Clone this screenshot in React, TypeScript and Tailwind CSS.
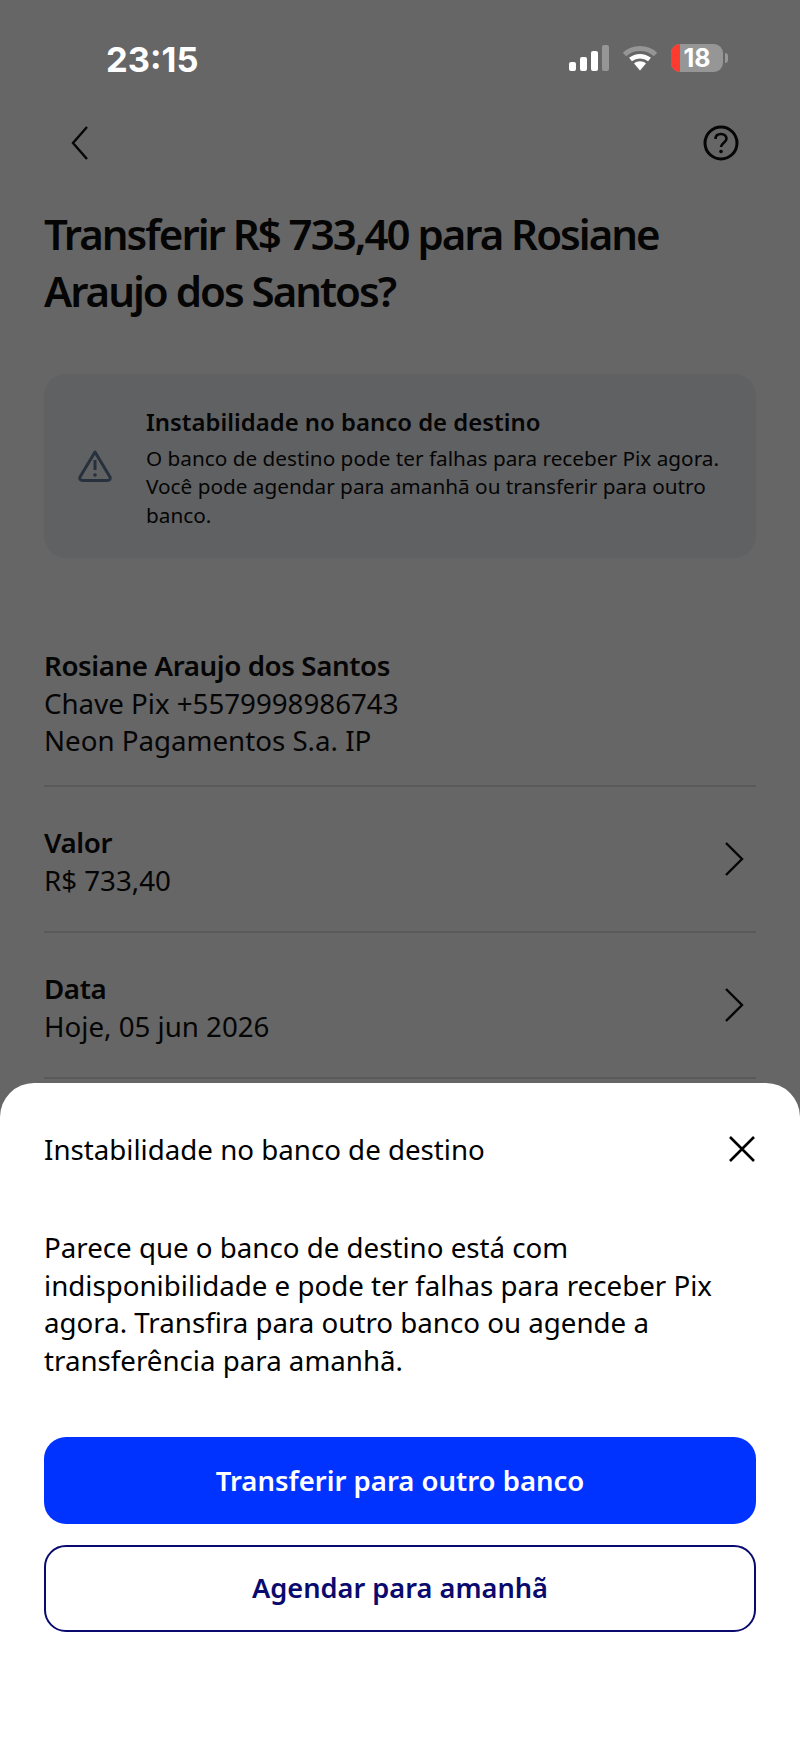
import React from "react";

const font = { fontFamily: '"Noto Sans", sans-serif' };

function Row({ label, value }: { label: string; value: string }) {
  return (
    <div className="flex h-[146px] items-center justify-between border-b-2 border-[#5a5a5a] pt-[6px]">
      <div className="text-[27.7px] leading-[37.5px] text-[#050505]">
        <div className="font-semibold tracking-[-0.4px]">{label}</div>
        <div>{value}</div>
      </div>
      <svg width="24" height="36" viewBox="0 0 24 36" fill="none" className="mb-[6px] mr-[10px]">
        <path d="M4 2 L20 18 L4 34" stroke="#050505" strokeWidth="2.4" />
      </svg>
    </div>
  );
}

export default function App() {
  return (
    <div className="relative h-[1738px] w-[800px] overflow-hidden bg-[#666666]" style={font}>
      <div className="flex h-[118px] items-end justify-between pb-[1px] pl-[106px] pr-[72px]">
        <div className="mb-[38px] text-[34.5px] font-bold leading-[38px] text-white" style={{ fontFamily: '"Inter", sans-serif' }}>
          23:15
        </div>
        <div className="mb-[45px] flex items-center gap-[13px]">
          <svg width="40" height="26" viewBox="0 0 40 26">
            <rect x="0" y="17" width="7" height="9" rx="2" fill="#fff" />
            <rect x="11" y="12" width="7" height="14" rx="2" fill="#fff" />
            <rect x="22" y="6" width="7" height="20" rx="2" fill="#fff" />
            <rect x="33" y="0" width="7" height="26" rx="2" fill="#969696" />
          </svg>
          <svg width="36" height="26" viewBox="0 0 36 26" fill="none">
            <path d="M2.5 9.5 C11 1.5 25 1.5 33.5 9.5" stroke="#969696" strokeWidth="5" />
            <path d="M8.5 14.5 C14 10 22 10 27.5 14.5" stroke="#fff" strokeWidth="4.5" />
            <path d="M12 18.5 L18 25.5 L24 18.5 C21 15.5 15 15.5 12 18.5 Z" fill="#fff" />
          </svg>
          <div className="flex items-center">
            <div className="relative flex h-[28px] w-[52px] items-center justify-center overflow-hidden rounded-[9px] bg-[#969696]">
              <div className="absolute bottom-0 left-0 top-0 w-[9px] bg-[#ff3b30]" />
              <span className="relative text-[25px] font-bold leading-none text-white" style={{ fontFamily: '"Inter", sans-serif' }}>18</span>
            </div>
            <div className="ml-[2px] h-[10px] w-[3px] rounded-r-full bg-[#969696]" />
          </div>
        </div>
      </div>

      <div className="flex h-[50px] items-center justify-between pl-[71px] pr-[61px]">
        <svg width="18" height="34" viewBox="0 0 18 34" fill="none">
          <path d="M16 1 L2 17 L16 33" stroke="#050505" strokeWidth="2.4" />
        </svg>
        <svg width="36" height="36" viewBox="0 0 36 36" fill="none">
          <circle cx="18" cy="18" r="16" stroke="#050505" strokeWidth="3" />
          <path d="M12.5 14 C12.5 10.5 15 9 18 9 C21 9 23.5 10.8 23.5 13.8 C23.5 17.5 18 18 18 22" stroke="#050505" strokeWidth="2.6" />
          <circle cx="18" cy="26.5" r="1.8" fill="#050505" />
        </svg>
      </div>

      <div className="px-[44px]">
        <h1 className="mt-[37px] text-[42px] font-semibold leading-[57px] tracking-[-2px] text-[#050505]">
          Transferir R$ 733,40 para Rosiane
          <br />
          Araujo dos Santos?
        </h1>

        <div className="mt-[55px] flex h-[184px] items-center rounded-[22px] bg-[#606163] pl-[33px] pr-[30px]">
          <svg width="36" height="34" viewBox="0 0 36 34" fill="none" className="shrink-0">
            <path d="M18 3 L33 28 Q34 31.5 30 31.5 L6 31.5 Q2 31.5 3 28 Z" stroke="#27303d" strokeWidth="3" strokeLinejoin="round" />
            <path d="M18 11 V21" stroke="#27303d" strokeWidth="3" />
            <circle cx="18" cy="26" r="1.8" fill="#27303d" />
          </svg>
          <div className="ml-[33px] pt-[3px] text-[#050505]">
            <div className="text-[23.9px] font-semibold leading-[32px]">Instabilidade no banco de destino</div>
            <div className="mt-[6px] whitespace-nowrap text-[20.75px] leading-[28.2px]">
              O banco de destino pode ter falhas para receber Pix agora.
              <br />
              Você pode agendar para amanhã ou transferir para outro
              <br />
              banco.
            </div>
          </div>
        </div>

        <div className="mt-[89px] border-b-2 border-[#5a5a5a] pb-[25px] text-[27.7px] leading-[37.5px] text-[#050505]">
          <div className="font-semibold tracking-[-0.4px]">Rosiane Araujo dos Santos</div>
          <div>Chave Pix +5579998986743</div>
          <div>Neon Pagamentos S.a. IP</div>
        </div>
        <Row label="Valor" value="R$ 733,40" />
        <Row label="Data" value="Hoje, 05 jun 2026" />
      </div>

      <div className="absolute bottom-0 left-0 right-0 top-[1083px] rounded-t-[34px] bg-white px-[44px]">
        <div className="mt-[47px] flex items-center justify-between">
          <div className="text-[27.7px] leading-[38px] text-black">Instabilidade no banco de destino</div>
          <svg width="28" height="28" viewBox="0 0 28 28" fill="none">
            <path d="M2 2 L26 26 M26 2 L2 26" stroke="#000" strokeWidth="2.6" />
          </svg>
        </div>
        <p className="mt-[61px] text-[27.7px] leading-[37.6px] text-black">
          Parece que o banco de destino está com
          <br />
          indisponibilidade e pode ter falhas para receber Pix
          <br />
          agora. Transfira para outro banco ou agende a
          <br />
          transferência para amanhã.
        </p>
        <button className="mt-[58px] flex h-[87px] w-full items-center justify-center rounded-[22px] bg-[#0033ff] text-[27.5px] font-semibold text-white">
          Transferir para outro banco
        </button>
        <button className="mt-[21px] flex h-[87px] w-full items-center justify-center rounded-[22px] border-2 border-[#0a0a6e] bg-white text-[27.2px] font-semibold text-[#0a0a6e]">
          Agendar para amanhã
        </button>
      </div>
    </div>
  );
}
